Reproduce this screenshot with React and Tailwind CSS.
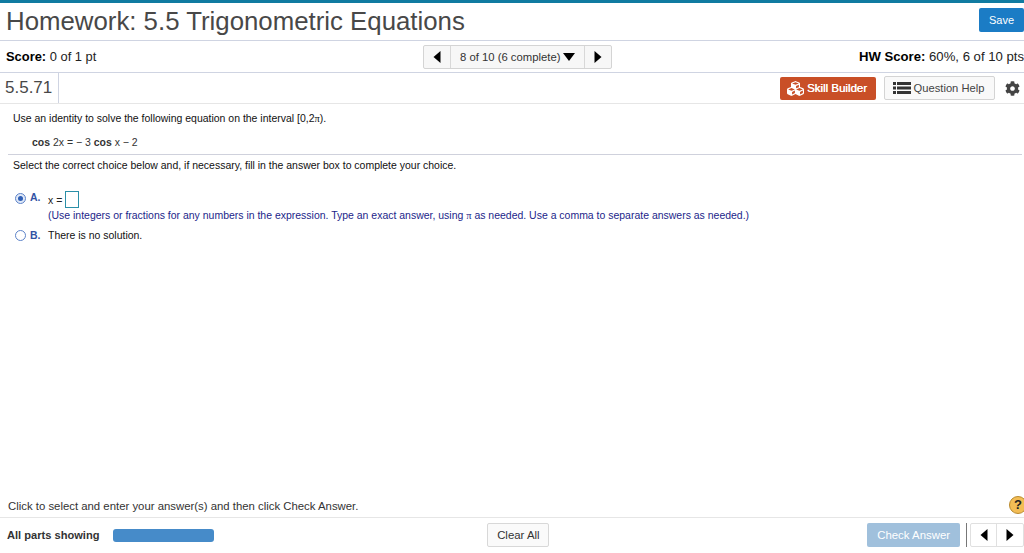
import React from "react";
import { FaCog, FaCubes } from "react-icons/fa";

const Tri = ({ dir }) => (
  <svg width="10" height="12" viewBox="0 0 10 12" className="block">
    <path d={dir === "left" ? "M8.5 0V12L1.5 6Z" : "M1.5 0V12L8.5 6Z"} fill="#000" />
  </svg>
);

export default function App() {
  return (
    <div className="flex h-[553px] w-[1024px] flex-col overflow-hidden bg-white font-['Liberation_Sans',Arial,sans-serif] text-black">
      <div className="h-[3px] bg-[#107ba1]" />
      <header className="flex h-[38px] items-center justify-between border-b border-[#cfd4e2] pl-[6px]">
        <h1 className="mb-[2px] text-[25.8px] leading-[34px] text-[#484848]">Homework: 5.5 Trigonometric Equations</h1>
        <button className="mb-[3px] h-[24px] w-[45px] rounded-[2px] bg-[#1b7cc5] text-[11px] text-white">Save</button>
      </header>

      <div className="grid h-[32px] grid-cols-[1fr_auto_1fr] items-center border-b border-[#cfd4e2] px-[6px] text-[12.9px]">
        <div className="mt-[1px]"><b>Score:</b> <span className="text-[#222]">0 of 1 pt</span></div>
        <div className="ml-[11px] flex h-[24px] items-stretch rounded-[2px] border border-[#d4d4d4] bg-[#f7f7f7]">
          <span className="flex w-[27px] items-center justify-center border-r border-[#d8d8d8]"><Tri dir="left" /></span>
          <span className="flex w-[133px] items-center pl-[9px] pt-[1px] text-[11.3px] text-[#333]">
            8 of 10 (6 complete)
            <svg width="12" height="8" viewBox="0 0 12 8" className="ml-[3px]"><path d="M0 0H12L6 8Z" fill="#000" /></svg>
          </span>
          <span className="flex w-[27px] items-center justify-center border-l border-[#d8d8d8]"><Tri dir="right" /></span>
        </div>
        <div className="-mr-[6px] mt-[1px] whitespace-nowrap text-right text-[13.15px]"><b>HW Score:</b> <span className="text-[#222]">60%, 6 of 10 pts</span></div>
      </div>

      <div className="flex h-[31px] items-stretch justify-between border-b border-[#e6e6e6] pl-[5px]">
        <div className="flex w-[54px] items-center border-r border-[#cfd4e2] text-[17px] text-[#484848]">5.5.71</div>
        <div className="flex items-center pr-[4px]">
          <button className="flex h-[23px] w-[96px] items-center justify-center gap-[3px] rounded-[2px] bg-[#c94f27] pr-[2px] text-[11.5px] [font-weight:500] text-white [text-shadow:0.3px_0_0_#fff]">
            <FaCubes size={17} color="#fff" />
            <span className="mt-[1px]">Skill Builder</span>
          </button>
          <button className="ml-[8px] flex h-[24px] w-[111px] items-center justify-center gap-[3px] rounded-[2px] border border-[#d4d4d4] bg-[#f9f9f9] pr-[2px] text-[11.2px] text-[#444]">
            <svg width="18" height="12" viewBox="0 0 18 12" aria-hidden="true">
              <path d="M0 0h3v3H0zM0 4.5h3v3H0zM0 9h3v3H0zM4 0h14v3H4zM4 4.5h14v3H4zM4 9h14v3H4z" fill="#333" />
            </svg>
            Question Help
          </button>
          <FaCog size={15} color="#444" className="ml-[10px]" />
        </div>
      </div>

      <main className="flex-1 text-[10.48px] text-[#111]">
        <p className="mt-[9px] pl-[13px] leading-[12px]">Use an identity to solve the following equation on the interval [0,2<span className="font-['Liberation_Serif',serif]">π</span>).</p>
        <p className="mt-[12px] pl-[32px] leading-[12px] text-[#333]"><b>cos</b> 2x = − 3 <b>cos</b> x − 2</p>
        <div className="ml-[8px] mr-[2px] mt-[5px] h-px bg-[#cfd1dc]" />
        <p className="mt-[5px] pl-[13px] leading-[12px]">Select the correct choice below and, if necessary, fill in the answer box to complete your choice.</p>

        <div className="mt-[19px] flex h-[17px] items-center pl-[15px]">
          <span className="mb-[3px] flex h-[11px] w-[11px] items-center justify-center rounded-full border border-[#5d83c9] bg-[#dfe8f7]"><span className="h-[5px] w-[5px] rounded-full bg-[#2f5fb5]" /></span>
          <b className="mb-[3px] ml-[4px] w-[18px] text-[#3353a4]">A.</b>
          <span className="mt-[2px] text-[#222]">x =</span>
          <span className="ml-[3px] h-[17px] w-[14px] border border-[#2a8fa8]" />
        </div>
        <p className="mt-[2px] pl-[48px] leading-[12px] text-[#1c1f8a]">(Use integers or fractions for any numbers in the expression. Type an exact answer, using <span className="font-['Liberation_Serif',serif]">π</span> as needed. Use a comma to separate answers as needed.)</p>
        <div className="mt-[7px] flex h-[13px] items-center pl-[15px]">
          <span className="h-[11px] w-[11px] rounded-full border border-[#5d83c9]" />
          <b className="ml-[4px] w-[18px] text-[#3353a4]">B.</b>
          <span>There is no solution.</span>
        </div>
      </main>

      <div className="flex h-[27px] items-center justify-between border-b border-[#e6e6e6] pl-[8px] text-[11.36px] text-[#333]">
        <span className="mt-[5px]">Click to select and enter your answer(s) and then click Check Answer.</span>
        <span className="-mr-[3px] mt-[2px] flex h-[18px] w-[18px] shrink-0 items-center justify-center rounded-full border border-[#b98a2e] bg-[#f3bd55] text-[13px] font-bold text-[#222]">?</span>
      </div>

      <footer className="flex h-[35px] items-center pl-[7px] pb-[1px]">
        <b className="w-[106px] text-[11.1px] text-[#333]">All parts showing</b>
        <div className="h-[13px] w-[102px] rounded-[3px] bg-[#468bc9]" />
        <button className="ml-[273px] h-[24px] w-[62px] rounded-[2px] border border-[#d8d8d8] bg-[#fafafa] pt-[1px] text-[11.4px] text-[#333]">Clear All</button>
        <button className="ml-[318px] h-[24px] w-[93px] rounded-[2px] bg-[#a0c0dc] pt-[1px] text-[11.4px] text-white">Check Answer</button>
        <div className="ml-[6px] h-[24px] w-px bg-[#777]" />
        <div className="ml-[3px] flex h-[24px] w-[54px] shrink-0 items-stretch rounded-[2px] border border-[#e0e0e0]">
          <span className="flex w-[27px] items-center justify-center border-r border-[#e0e0e0]"><Tri dir="left" /></span>
          <span className="flex w-[27px] items-center justify-center"><Tri dir="right" /></span>
        </div>
      </footer>
    </div>
  );
}
